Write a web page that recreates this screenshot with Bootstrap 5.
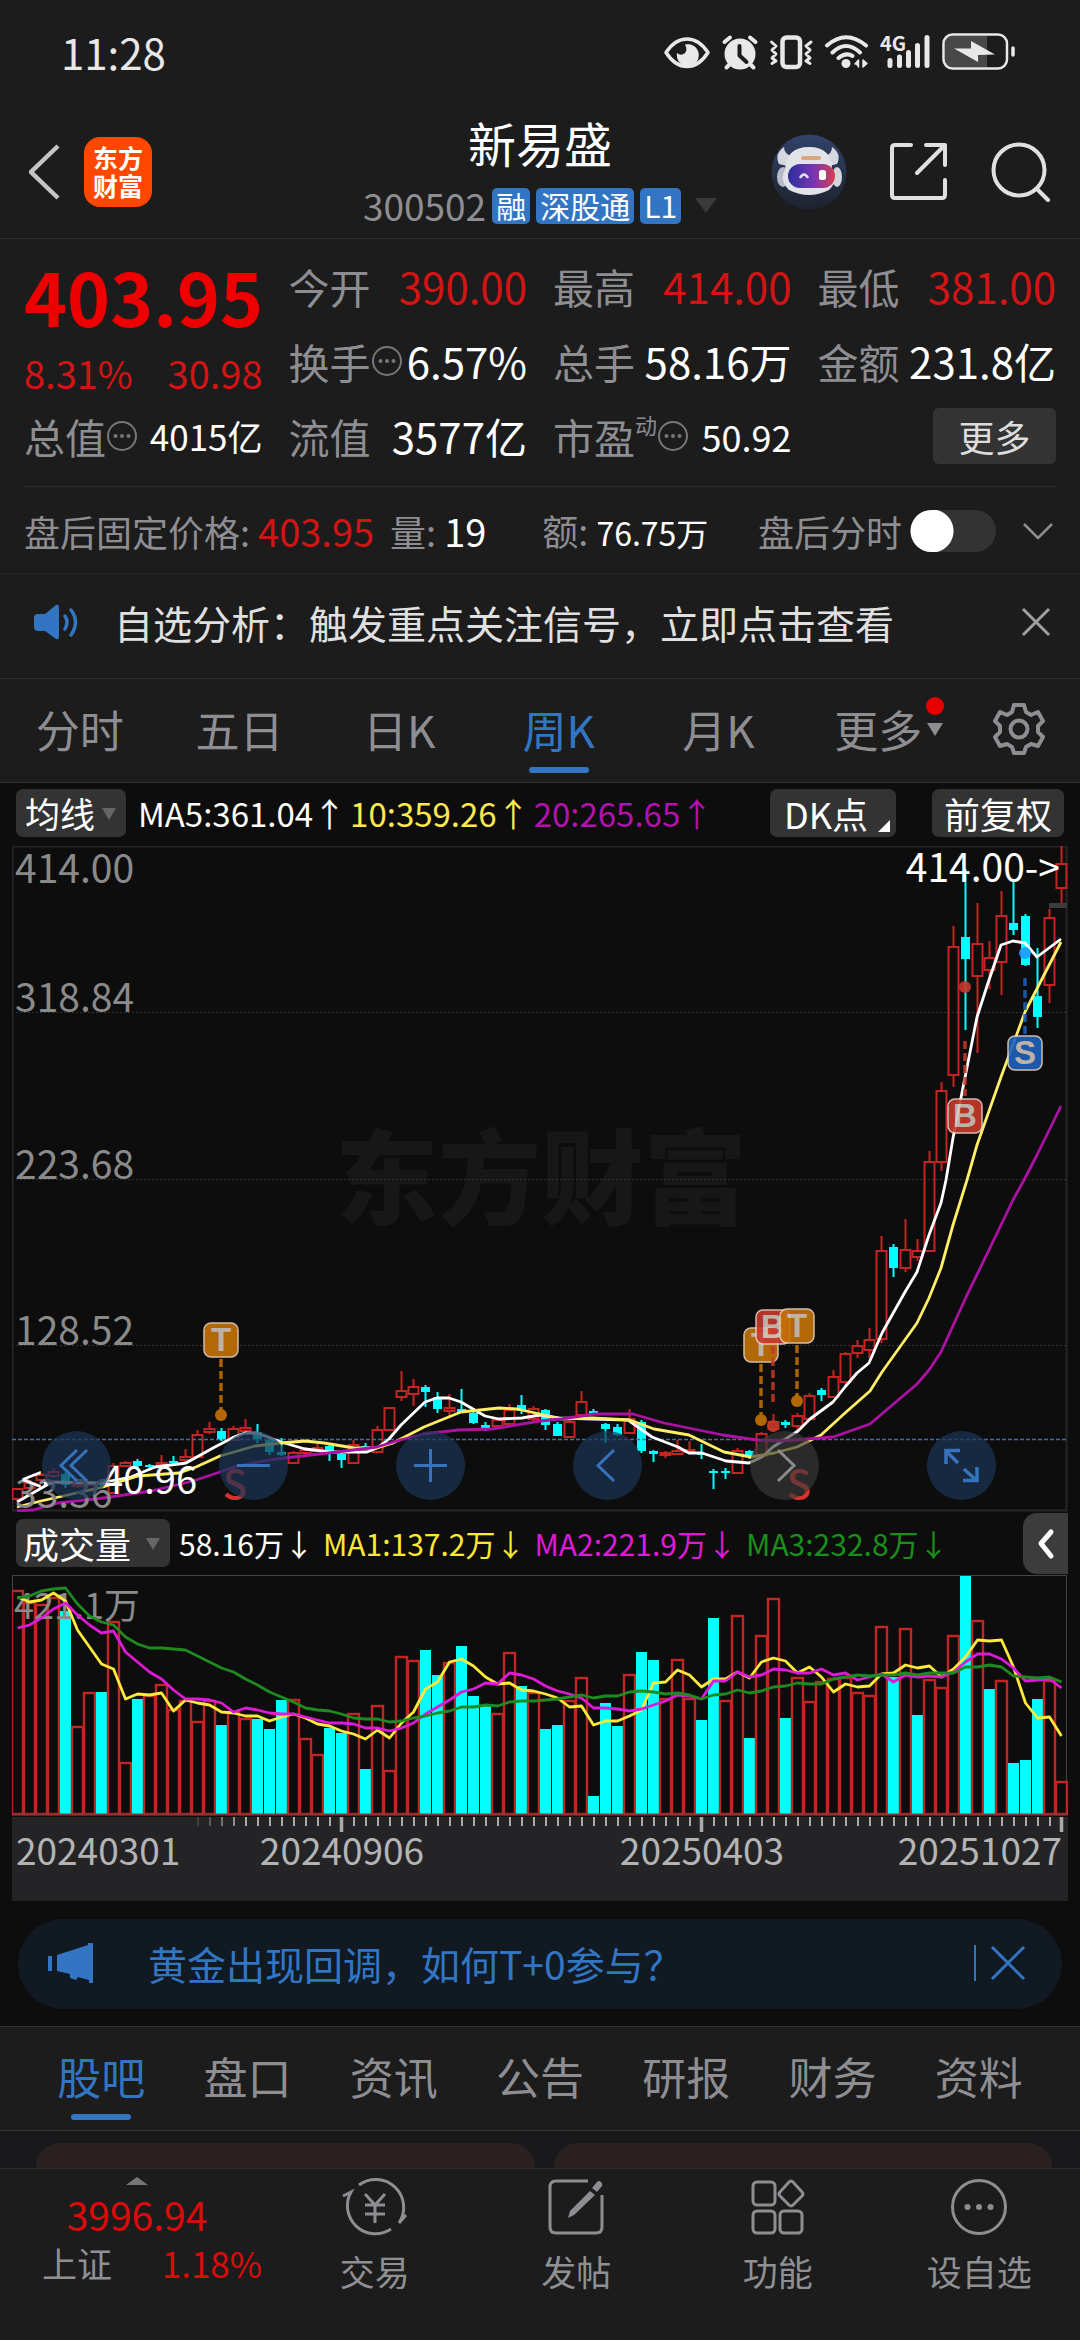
<!DOCTYPE html>
<html lang="zh-CN">
<head>
<meta charset="utf-8">
<meta name="viewport" content="width=device-width, initial-scale=1">
<title>新易盛 300502</title>
<link href="https://cdn.jsdelivr.net/npm/bootstrap@5.3.0/dist/css/bootstrap.min.css" rel="stylesheet">
<style>
:root{--panel:#1c1c1c;--ink:#0d0d0d;--line:#333;--dim:#8e8e92;--red:#d21414;--hot:#ee0000;--blue:#3276c3}
body{background:var(--ink);color:#fff;font-family:"Noto Sans CJK SC","Noto Sans",sans-serif;font-size:36px;line-height:48px;overflow-x:hidden}
a{color:inherit;text-decoration:none}
button{background:none;border:0;padding:0;color:inherit;line-height:inherit}
svg{display:block}
svg text{font-family:"Noto Sans CJK SC",sans-serif}
.panel{background:var(--panel)}
.rule-t{border-top:1px solid var(--line)}
.rule-b{border-bottom:1px solid var(--line)}
.rule-faint{border-bottom:1px solid #262626}
.dim{color:var(--dim)}.red{color:var(--red)}.hot{color:#dc0b0b}

.status{padding:0 65px 0 61px;height:104px;font-size:42px;color:#e8e8e8}
.head{padding:6px 29px 13px 29px}
.head-side{flex:1 1 0}
.head-tools{gap:42px}
.logo{width:68px;height:70px;border-radius:16px;background:#ff4700;font-size:25px;line-height:28px;font-weight:700;padding:6px 0;text-align:center}
.title{font-size:48px;line-height:64px;font-weight:400}
.sub{font-size:37px;line-height:39px;margin-top:12px;gap:6px}
.tag{background:var(--blue);border-radius:5px;font-size:30px;line-height:35px;height:36px;padding:0 4px}
.tri{width:0;height:0;border:11px solid transparent;border-top:15px solid #3a3a3a;border-bottom:0}

.quote{padding:9px 24px 13px;display:grid;grid-template-columns:repeat(4,minmax(0,1fr));column-gap:26px;grid-auto-rows:75px;align-items:center;font-size:42px}
.quote .dim{font-size:41px}
.price-cell{grid-row:span 2;padding-top:8px}
.price{font-size:73px;line-height:84px;font-weight:700;color:var(--hot)}
.pct{font-size:38px;line-height:56px;margin-top:8px}
.v35{font-size:35px}.v36{font-size:36px}
.quote .sup{font-size:22px;line-height:24px;align-self:flex-start}
.more{background:#333;border-radius:6px;font-size:36px;line-height:56px;width:123px;color:#ddd}
.thin-rule{height:1px;background:#2a2a2a;margin:0 24px}
.after{padding:18px 24px 16px;line-height:50px}
.after .v38{font-size:38px}.after .v32{font-size:32px}
.tog{appearance:none;width:86px;height:42px;border-radius:21px;margin:0 0 0 8px;background:radial-gradient(circle at 22px 50%,#fff 21px,transparent 22px) #333}

.notice{padding:20px 29px 28px 34px;line-height:56px;font-size:39px;color:#e0e0e0;gap:34px}
.ktabs{line-height:64px;font-size:44px;padding:18px 0 21px}
.tabx{flex:1 1 0;text-align:center;position:relative;color:var(--dim)}
.tabx.on{color:var(--blue)}
.tabx.on::after{content:"";position:absolute;left:50%;bottom:-12px;margin-left:-30px;width:60px;height:6px;border-radius:3px;background:var(--blue)}
.gear{width:122px}
.dot{position:absolute;right:14px;top:0;width:18px;height:18px;border-radius:50%;background:#e80000}
.caret{position:absolute;right:15px;top:26px;border:8px solid transparent;border-top:13px solid #8e8e92;border-bottom:0}
.btabs{padding:17px 28px 22px;line-height:64px;font-size:44px}

.ma{padding:6px 16px 9px;font-size:33px;line-height:48px;gap:4px}
.pick{position:relative;background:#333;border-radius:7px;margin-right:8px}
.pick select,.chip{appearance:none;display:block;background:none;border:0;color:#fff;font-size:35px;line-height:48px;height:48px;padding:0 30px 0 9px;outline:0}
.pick::after{content:"";position:absolute;right:10px;top:19px;border:7px solid transparent;border-top:12px solid #666;border-bottom:0;pointer-events:none}
.pick.vol{margin-right:0}
.pick.vol select{padding:0 38px 0 7px;font-size:36px}
.chip{background:#333;border-radius:7px;padding:0 12px;font-size:36px;position:relative;text-align:left}
.chip.dk{padding:0 28px 0 14px}
.chip.dk::after{content:"";position:absolute;right:6px;bottom:5px;border:6px solid transparent;border-right-color:#fff;border-bottom-color:#fff}
.yel{color:#ffe94f}.mag{color:#b412ad}
.volhead{padding:7px 0 8px 4px;font-size:30px;line-height:48px;position:relative;gap:9px}
.m1{color:#ffe832}.m2{color:#e018d8}.m3{color:#1b8f1b}
.drawer{position:absolute;right:0;top:1px;width:45px;height:61px;border-radius:14px 0 0 14px;background:#3c3c3c}
.chartwrap{margin:0 12px;position:relative}
.tools{position:absolute;left:30px;right:72px;bottom:12px}
.tools button{width:69px;height:69px;border-radius:50%;background:rgba(28,52,86,.72);stroke:#3573bd}
.tools button:disabled{background:rgba(58,58,58,.65);stroke:#8a8a8a}
.axis{background:#242427}

.promo{margin:18px 18px 17px;border-radius:45px;background:#111a23;color:var(--blue);font-size:39px;line-height:58px;padding:15px 36px 17px 30px}
.feed{background:#19191b;padding:12px 28px 0 36px;gap:19px}
.feed div{flex:1;height:100px;border-radius:24px 24px 0 0;background:#2a2020}
.dock{border-top:1px solid #2c2c2c;padding:8px 0 47px;font-size:35px;line-height:44px;color:#909094}
.dock .cellx{flex:1 1 0;text-align:center}
.dock .cellx span{display:block;margin-top:12px}
.dock .idx{flex:0 0 274px}
.idx-val{font-size:39px;line-height:50px;margin-top:4px}
.idx-row{line-height:48px;padding:0 12px 0 42px}
</style>
<script src="https://cdn.jsdelivr.net/npm/bootstrap@5.3.0/dist/js/bootstrap.bundle.min.js"></script>
</head>
<body>

<div class="status panel d-flex align-items-center justify-content-between">
  <span>11:28</span>
  <svg width="352" height="40" viewBox="13 12 352 40" fill="none" stroke="#e8e8e8" stroke-linecap="round" stroke-linejoin="round">
    <path d="M16 32.500Q25 19 37 19T58 32.500Q49 46.500 37 46.500T16 32.500Z" stroke-width="3.500"/>
    <path d="M35 24.500A11 11 0 1 1 27 33Q31 36 34.500 33.500Q38 30 35 24.500Z" fill="#e8e8e8" stroke="none"/>
    <circle cx="90" cy="34" r="15.500" fill="#e8e8e8" stroke="none"/>
    <path d="M74.500 22L80 17.500M105.500 22L100 17.500M79 45L76.500 47.500M101 45L103.500 47.500" stroke-width="4"/>
    <path d="M89.500 26V35.500L96.500 42" stroke="#1c1c1c" stroke-width="4"/>
    <rect x="132.500" y="17.500" width="17.500" height="29.500" rx="4" stroke-width="4.500"/>
    <path d="M121.500 22L126 26L122 30L126 34L122 38L126 41L122 43.500M161 22L156 26L160 30L156 34L160 38L156 41L160 43.500" stroke-width="3"/>
    <path d="M177 25.500Q196 9 216 25.500M182.500 32.500Q196 19.500 210 32.500M188.500 38Q196 32 202.500 36" stroke-width="4"/>
    <circle cx="196" cy="43.500" r="4.500" fill="#e8e8e8" stroke="none"/>
    <path d="M205 44L208.500 40V47M213 40V47L217 43.500Z" fill="#e8e8e8" stroke-width="1.500"/>
    <text x="230" y="31" font-size="20" font-weight="700" fill="#e8e8e8" stroke="none">4G</text>
    <path d="M240 40.500V45.500M249.500 37V45.500M258.500 32.500V45.500M267.500 25.500V45.500M277 17.500V45.500" stroke-width="5"/>
    <path d="M302 16H337V47H302Q295 47 295 40V23Q295 16 302 16Z" fill="#484848" stroke="none"/>
    <rect x="293.500" y="14.500" width="63.500" height="34" rx="9" stroke-width="2.500"/>
    <path d="M304 28.500L321 28.500V21L345 34.500L328 35V42Z" fill="#e8e8e8" stroke="none"/>
    <path d="M363 28V35" stroke-width="3.500"/>
  </svg>
</div>

<header class="head panel rule-b d-flex align-items-center justify-content-between">
  <div class="head-side d-flex align-items-center gap-4 mt-2">
    <a href="#" aria-label="返回"><svg width="31" height="56" viewBox="2 0 31 56" fill="none" stroke="#c4c4c4" stroke-width="4.500"><path d="M31 2L4 28L31 54"/></svg></a>
    <div class="logo">东方<br>财富</div>
  </div>
  <div class="text-center">
    <h1 class="title m-0">新易盛</h1>
    <div class="sub d-flex align-items-center">
      <span class="dim">300502</span><span class="tag">融</span><span class="tag">深股通</span><span class="tag">L1</span><span class="tri ms-2"></span>
    </div>
  </div>
  <div class="head-side head-tools d-flex align-items-center justify-content-end mt-2">
    <a href="#" aria-label="智能助手"><svg width="76" height="76" viewBox="0 0 76 76">
      <defs><linearGradient id="visor"><stop offset="0" stop-color="#2b2f9e"/><stop offset=".55" stop-color="#7a35b4"/><stop offset="1" stop-color="#d6404e"/></linearGradient>
      <linearGradient id="disc" x2="0" y2="1"><stop offset="0" stop-color="#31436a"/><stop offset="1" stop-color="#1d222e"/></linearGradient></defs>
      <circle cx="38" cy="38" r="37.500" fill="url(#disc)"/>
      <path d="M13 13Q3 20 8 30L16 32L21 22Q13 20 13 13ZM61 13Q71 20 66 30L58 32L54 22Q61 20 61 13Z" fill="#d5d6de"/>
      <ellipse cx="12" cy="43" rx="6" ry="10" fill="#b8bac8"/><ellipse cx="66" cy="43" rx="5" ry="10" fill="#d3d4dc"/>
      <path d="M14 36Q15 13 38 13T61 36Q68 46 58 56Q38 66 18 56Q8 46 14 36Z" fill="#e2e2e9"/>
      <rect x="17" y="30" width="47" height="24" rx="12" fill="url(#visor)"/>
      <rect x="30" y="22" width="20" height="4" rx="2" fill="#d9a67e"/>
      <path d="M29 44Q33 37 37 44" fill="none" stroke="#dfe0ff" stroke-width="2.500"/><rect x="48" y="36" width="7" height="10" rx="2.500" fill="#fff"/>
    </svg></a>
    <a href="#" aria-label="分享"><svg width="60" height="60" viewBox="0 0 60 60" fill="none" stroke="#e0e0e0" stroke-width="4" stroke-linecap="round" stroke-linejoin="round"><path d="M22 3H6Q3 3 3 6V53Q3 56 6 56H53Q56 56 56 53V38M37 3H56V23M55 4L28 31"/></svg></a>
    <a href="#" aria-label="搜索"><svg width="60" height="60" viewBox="0 0 60 60" fill="none" stroke="#e0e0e0" stroke-width="4" stroke-linecap="round"><circle cx="28" cy="28" r="25.500"/><path d="M46 47L57 58"/></svg></a>
  </div>
</header>

<section class="panel">
  <div class="quote text-nowrap">
    <div class="price-cell">
      <div class="price">403.95</div>
      <div class="pct red d-flex justify-content-between"><span>8.31%</span><span>30.98</span></div>
    </div>
    <div class="d-flex justify-content-between"><span class="dim">今开</span><span class="red">390.00</span></div>
    <div class="d-flex justify-content-between"><span class="dim">最高</span><span class="red">414.00</span></div>
    <div class="d-flex justify-content-between"><span class="dim">最低</span><span class="red">381.00</span></div>
    <div class="d-flex justify-content-between align-items-center"><span class="dim d-flex align-items-center">换手<svg width="32" height="32"><use href="#info"/></svg></span><span>6.57%</span></div>
    <div class="d-flex justify-content-between"><span class="dim">总手</span><span>58.16万</span></div>
    <div class="d-flex justify-content-between"><span class="dim">金额</span><span>231.8亿</span></div>
    <div class="d-flex justify-content-between align-items-center"><span class="dim d-flex align-items-center">总值<svg width="32" height="32"><use href="#info"/></svg></span><span class="v35">4015亿</span></div>
    <div class="d-flex justify-content-between"><span class="dim">流值</span><span>3577亿</span></div>
    <div class="d-flex justify-content-between align-items-center"><span class="dim d-flex align-items-center">市盈<span class="sup">动</span><svg width="32" height="32"><use href="#info"/></svg></span><span class="v36">50.92</span></div>
    <div class="text-end"><button class="more" type="button">更多</button></div>
  </div>
  <div class="thin-rule"></div>
  <div class="after rule-faint d-flex align-items-center text-nowrap">
    <span class="dim">盘后固定价格: <span class="red v38">403.95</span></span>
    <span class="dim ms-3">量: <span class="text-white v38">19</span></span>
    <span class="dim ms-5 ps-2">额: <span class="text-white v32">76.75万</span></span>
    <label class="dim ms-auto" for="aft">盘后分时</label><input class="tog" type="checkbox" role="switch" id="aft">
    <svg class="ms-4" width="36" height="20" viewBox="0 0 36 20" fill="none" stroke="#8e8e92" stroke-width="2.500"><path d="M4 3L18 17L32 3"/></svg>
  </div>
  <div class="notice rule-b d-flex align-items-center text-nowrap">
    <svg width="46" height="36" viewBox="0 0 46 36" fill="none" stroke="#3276c3" stroke-width="3.500" stroke-linecap="round"><path d="M4 10H11L22 1Q25 0 25 4V32Q25 36 22 35L11 27H4Q0 27 0 23V14Q0 10 4 10Z" fill="#3276c3" stroke="none"/><path d="M31 12Q35 18 31 25M37 6Q46 18 37 31"/></svg>
    <a href="#" class="flex-fill">自选分析：触发重点关注信号，立即点击查看</a>
    <button type="button" aria-label="关闭"><svg width="30" height="30" viewBox="0 0 30 30" stroke="#a0a0a0" stroke-width="3"><path d="M2 2L28 28M28 2L2 28"/></svg></button>
  </div>
</section>

<nav class="ktabs panel rule-b d-flex align-items-center text-nowrap">
  <a class="tabx" href="#">分时</a><a class="tabx" href="#">五日</a><a class="tabx" href="#">日K</a><a class="tabx on" href="#">周K</a><a class="tabx" href="#">月K</a>
  <a class="tabx" href="#">更多<span class="dot"></span><span class="caret"></span></a>
  <button class="gear d-flex justify-content-center" type="button" aria-label="设置"><svg width="52" height="52" viewBox="0 0 52 52" fill="none" stroke="#8e8e92" stroke-width="4" stroke-linejoin="round"><path d="M21 2H31L33 9L38 12L45 9L50 18L45 23V29L50 34L45 43L38 41L33 44L31 50H21L19 44L14 41L7 43L2 34L7 29V23L2 18L7 9L14 12L19 9Z"/><circle cx="26" cy="26" r="8.500"/></svg></button>
</nav>

<div class="ma d-flex align-items-center text-nowrap">
  <label class="pick"><select aria-label="指标"><option>均线</option></select></label>
  <span>MA5:361.04↑</span><span class="yel">10:359.26↑</span><span class="mag">20:265.65↑</span>
  <button class="chip dk ms-auto me-3" type="button">DK点</button>
  <button class="chip ms-3" type="button">前复权</button>
</div>

<div class="chartwrap">
  <svg id="kline" width="100%" viewBox="12 846 1056 666"></svg>
  <div class="tools d-flex justify-content-between">
    <button type="button" aria-label="最前"><svg width="69" height="69" viewBox="0 0 69 69" fill="none" stroke-width="3"><path d="M35 19L19 34.500L35 50M45 19L29 34.500L45 50"/></svg></button>
    <button type="button" aria-label="缩小"><svg width="69" height="69" viewBox="0 0 69 69" stroke-width="3"><path d="M18 34.500H51"/></svg></button>
    <button type="button" aria-label="放大"><svg width="69" height="69" viewBox="0 0 69 69" stroke-width="3"><path d="M18 34.500H51M34.500 18V51"/></svg></button>
    <button type="button" aria-label="左移"><svg width="69" height="69" viewBox="0 0 69 69" fill="none" stroke-width="3"><path d="M41 19L25 34.500L41 50"/></svg></button>
    <button type="button" aria-label="右移" disabled><svg width="69" height="69" viewBox="0 0 69 69" fill="none" stroke-width="3"><path d="M28 19L44 34.500L28 50"/></svg></button>
    <button type="button" aria-label="全屏"><svg width="69" height="69" viewBox="0 0 69 69" fill="none" stroke-width="3.500"><path d="M31 32L19 20M19 33V19.500H33M37 38L50 50M50 36V49.500H36"/></svg></button>
  </div>
</div>

<div class="chartwrap">
  <div class="volhead d-flex align-items-center text-nowrap">
    <label class="pick vol"><select aria-label="副图指标"><option>成交量</option></select></label>
    <span>58.16万↓</span><span class="m1">MA1:137.2万↓</span><span class="m2">MA2:221.9万↓</span><span class="m3">MA3:232.8万↓</span>
    <button class="drawer" type="button" aria-label="展开"><svg width="45" height="61" viewBox="0 0 45 61" fill="none" stroke="#fff" stroke-width="5" stroke-linecap="round" stroke-linejoin="round"><path d="M28 19L18 30.500L28 43"/></svg></button>
  </div>
  <svg id="volume" width="100%" viewBox="12 1575 1056 242"></svg>
  <svg id="dates" class="axis" width="100%" viewBox="12 1817 1056 84"></svg>
</div>

<div class="promo d-flex align-items-center text-nowrap">
  <svg width="48" height="40" viewBox="0 0 48 40" fill="#3276c3"><path d="M0 13H4V28H0ZM9 12L40 2V0H45V40H41V37L30 34L28 37L22 35V31L9 28Z"/></svg>
  <a href="#" class="flex-fill ms-5 ps-1">黄金出现回调，如何T+0参与？</a>
  <svg width="52" height="36" viewBox="0 0 52 36" fill="none" stroke="#3276c3"><path d="M1 0V36" stroke-width="2"/><path d="M18 2L50 34M50 2L18 34" stroke-width="3"/></svg>
</div>

<nav class="btabs panel rule-t rule-b d-flex text-nowrap">
  <a class="tabx on" href="#">股吧</a><a class="tabx" href="#">盘口</a><a class="tabx" href="#">资讯</a><a class="tabx" href="#">公告</a><a class="tabx" href="#">研报</a><a class="tabx" href="#">财务</a><a class="tabx" href="#">资料</a>
</nav>
<div class="feed d-flex"><div></div><div></div></div>

<nav class="dock panel fixed-bottom d-flex text-nowrap">
  <a href="#" class="idx d-block text-center">
    <svg class="mx-auto" width="22" height="8" viewBox="0 0 22 8" fill="#777"><path d="M11 0L22 8H0Z"/></svg>
    <div class="idx-val hot">3996.94</div>
    <div class="idx-row d-flex justify-content-between"><span>上证</span><span class="hot">1.18%</span></div>
  </a>
  <a href="#" class="cellx"><svg class="mx-auto" width="68" height="60" viewBox="0 0 68 60" fill="none" stroke="#8e8e92" stroke-width="3"><path d="M18 8A28 28 0 0 1 58 46L65 38M50 52A28 28 0 0 1 10 15L2 19M24 17L34 28L44 17M34 28V46M24 28H44M24 37H44"/></svg><span>交易</span></a>
  <a href="#" class="cellx"><svg class="mx-auto" width="60" height="60" viewBox="0 0 60 60" fill="none" stroke="#8e8e92" stroke-width="3"><path d="M42 4H10Q4 4 4 10V50Q4 56 10 56H50Q56 56 56 50V18"/><path d="M46 11L51 5Q53 3 55 5T56 9L51 15ZM44 14L49 18L28 38L22 41L24 34Z" fill="#8e8e92" stroke="none"/></svg><span>发帖</span></a>
  <a href="#" class="cellx"><svg class="mx-auto" width="60" height="60" viewBox="0 0 60 60" fill="none" stroke="#8e8e92" stroke-width="3"><rect x="5" y="5" width="22" height="23" rx="4"/><rect x="5" y="34" width="22" height="22" rx="4"/><rect x="32" y="34" width="22" height="22" rx="4"/><path d="M41 5Q43 3 45 5L54 15Q56 17 54 19L45 28Q43 30 41 28L32 19Q30 17 32 15Z"/></svg><span>功能</span></a>
  <a href="#" class="cellx"><svg class="mx-auto" width="60" height="60" viewBox="0 0 60 60" fill="#8e8e92"><circle cx="30" cy="30" r="26.500" fill="none" stroke="#8e8e92" stroke-width="3"/><circle cx="18.500" cy="30" r="3"/><circle cx="30" cy="30" r="3"/><circle cx="41.500" cy="30" r="3"/></svg><span>设自选</span></a>
</nav>

<svg width="0" height="0" class="position-absolute"><symbol id="info" viewBox="0 0 32 32"><circle cx="16" cy="16" r="14" fill="none" stroke="#77777a" stroke-width="2"/><circle cx="9.500" cy="16" r="2" fill="#77777a"/><circle cx="16" cy="16" r="2" fill="#77777a"/><circle cx="22.500" cy="16" r="2" fill="#77777a"/></symbol></svg>

<script>
// weekly candles: direction, high, body top, body bottom, low
const K = `u 1489 1489 1499 1499|u 1481 1483 1488 1490|u 1473 1475 1480 1484|u 1468 1472 1476 1478|d 1472 1474 1485 1488|u 1482 1484 1486 1488|u 1481 1483 1485 1486|d 1479 1482 1485 1488|u 1463 1466 1493 1493|u 1461 1463 1466 1467|d 1459 1461 1466 1468|d 1464 1465 1467 1470|u 1455 1463 1465 1467|d 1456 1461 1463 1465|u 1449 1457 1460 1462|u 1430 1435 1457 1457|u 1422 1429 1432 1434|d 1428 1431 1440 1441|u 1426 1429 1440 1441|u 1419 1428 1431 1432|d 1424 1432 1439 1443|d 1436 1440 1452 1455|d 1438 1452 1455 1456|u 1451 1453 1463 1464|u 1447 1450 1453 1454|u 1444 1448 1451 1452|d 1445 1446 1451 1461|d 1452 1454 1460 1468|u 1440 1445 1463 1463|d 1443 1446 1449 1450|u 1426 1430 1452 1452|u 1408 1408 1430 1430|u 1371 1391 1397 1401|u 1379 1387 1394 1406|d 1385 1387 1392 1407|d 1392 1397 1409 1413|u 1394 1408 1411 1417|d 1389 1409 1412 1412|d 1409 1413 1423 1424|d 1422 1425 1428 1431|u 1418 1420 1426 1427|u 1404 1410 1424 1425|d 1395 1405 1411 1414|u 1406 1409 1419 1421|d 1409 1410 1425 1430|d 1422 1424 1436 1436|u 1420 1422 1437 1438|u 1391 1402 1415 1415|d 1409 1411 1414 1415|d 1423 1424 1429 1443|d 1424 1427 1435 1436|u 1409 1419 1433 1434|d 1420 1422 1451 1453|d 1450 1451 1454 1462|u 1451 1453 1455 1458|u 1440 1451 1454 1454|u 1441 1450 1452 1452|d 1444 1453 1455 1459|d 1469 1471 1473 1489|d 1468 1471 1473 1479|u 1448 1451 1473 1473|d 1450 1451 1457 1459|u 1432 1434 1456 1456|u 1414 1422 1429 1432|d 1420 1422 1425 1428|u 1413 1416 1426 1432|u 1393 1396 1419 1419|d 1388 1390 1395 1401|u 1370 1377 1397 1397|u 1352 1354 1382 1385|u 1340 1346 1353 1358|u 1328 1340 1350 1358|u 1236 1251 1339 1343|d 1244 1247 1268 1277|u 1219 1250 1268 1272|u 1239 1251 1257 1261|u 1151 1162 1251 1251|u 1082 1091 1162 1171|u 926 947 1075 1087|d 869 937 959 1030|u 903 944 976 1053|u 941 958 970 989|u 891 916 962 995|d 880 923 930 935|d 914 916 965 966|d 948 996 1017 1028|u 909 918 985 1003|u 846 864 888 904`.split('|').map(r => r.split(' '));
// weekly volume bar tops, and the indexes of the falling weeks
const V = [1591,1603,1605,1598,1611,1727,1693,1692,1622,1763,1699,1696,1685,1710,1701,1722,1701,1725,1712,1719,1719,1729,1700,1700,1739,1755,1728,1733,1714,1769,1706,1771,1657,1661,1650,1675,1663,1646,1696,1706,1714,1653,1686,1693,1729,1725,1701,1678,1796,1703,1726,1675,1652,1660,1699,1660,1699,1720,1618,1701,1616,1738,1636,1599,1718,1678,1702,1682,1679,1678,1693,1696,1627,1677,1629,1715,1680,1688,1636,1576,1621,1689,1681,1763,1760,1699,1681,1782];
const VD = [4,7,10,17,20,21,22,26,27,29,34,35,37,38,39,42,44,45,48,49,50,52,53,57,58,61,64,73,75,79,81,83,84,85];
const A1 = [1597,1602,1600,1593,1601,1630,1647,1664,1669,1699,1694,1695,1693,1711,1700,1703,1705,1712,1713,1716,1716,1721,1717,1714,1718,1724,1726,1731,1734,1739,1730,1738,1723,1712,1689,1682,1662,1659,1666,1677,1684,1683,1690,1691,1694,1698,1707,1706,1725,1721,1721,1716,1710,1683,1682,1670,1675,1687,1679,1679,1672,1678,1662,1658,1661,1673,1667,1677,1692,1684,1687,1686,1674,1673,1665,1668,1666,1677,1669,1657,1640,1641,1640,1667,1703,1718,1717,1736];
const A2 = [1628,1625,1618,1609,1603,1615,1625,1633,1631,1652,1662,1672,1679,1690,1699,1699,1700,1703,1712,1708,1710,1713,1714,1714,1717,1720,1723,1723,1724,1728,1728,1731,1728,1723,1714,1707,1700,1692,1689,1683,1684,1673,1675,1679,1686,1691,1694,1698,1708,1708,1709,1711,1709,1705,1701,1695,1696,1699,1681,1681,1672,1677,1675,1669,1670,1673,1673,1669,1675,1673,1680,1677,1674,1682,1675,1677,1676,1677,1672,1662,1654,1654,1659,1668,1681,1680,1679,1688];
const A3 = [1598,1596,1591,1589,1588,1604,1616,1622,1625,1637,1644,1648,1648,1649,1650,1656,1662,1668,1672,1679,1685,1692,1697,1702,1708,1710,1711,1714,1718,1719,1719,1722,1721,1718,1716,1713,1711,1707,1707,1705,1706,1702,1701,1701,1700,1699,1697,1695,1698,1696,1696,1692,1691,1692,1694,1693,1695,1699,1695,1694,1690,1693,1691,1687,1686,1683,1684,1684,1679,1677,1675,1676,1675,1675,1673,1675,1673,1673,1673,1667,1667,1665,1667,1676,1677,1678,1677,1682];
const M5 = "17,1502 52,1482 100,1483 131,1477 155,1467 186,1463 213,1448 234,1437 245,1433 257,1433 281,1442 305,1449 331,1452 367,1452 377,1448 389,1439 401,1425 425,1402 437,1398 449,1398 461,1402 485,1416 499,1419 522,1418 540,1415 559,1418 628,1420 652,1437 678,1447 689,1453 702,1453 726,1461 749,1463 762,1457 773,1447 798,1431 810,1419 833,1402 845,1387 857,1373 869,1363 882,1333 905,1292 917,1272 929,1235 941,1203 946,1180 953,1138 977,1017 988,983 1001,945 1013,941 1025,943 1037,957 1049,948 1061,939";
const M10 = "17,1507 41,1501 103,1487 138,1476 179,1473 196,1467 220,1456 255,1446 281,1443 305,1441 324,1443 354,1448 377,1448 393,1443 424,1427 461,1412 499,1408 517,1409 540,1414 561,1419 592,1418 630,1420 654,1429 689,1435 724,1452 751,1457 774,1453 797,1447 821,1435 845,1413 870,1391 882,1372 917,1323 929,1298 941,1268 953,1225 967,1180 977,1145 1001,1077 1025,1012 1061,942";
const M20 = "17,1511 33,1510 58,1503 103,1498 151,1491 193,1481 238,1466 269,1460 293,1457 337,1452 377,1447 400,1440 424,1434 458,1430 492,1429 540,1421 561,1419 595,1414 633,1414 664,1423 723,1435 757,1440 781,1441 833,1437 870,1424 917,1384 929,1370 941,1352 967,1295 988,1252 1013,1200 1024,1180 1037,1155 1061,1106";
const X = i => 17.5 + 12 * i, UP = '#c32424', DN = '#00ffff';
const poly = (p, c, w) => `<polyline points="${p}" fill="none" stroke="${c}" stroke-width="${w}" stroke-linejoin="round"/>`;
const txt = (x, y, s, c, z, a) => `<text x="${x}" y="${y}" fill="${c}" font-size="${z}" ${a || ''}>${s}</text>`;

let g = txt(541, 1217, '东方财富', '#171717', 103, 'font-weight="900" text-anchor="middle"');
g += '<rect x="12.500" y="846.500" width="1054" height="664" fill="none" stroke="#262626" stroke-width="2"/>';
[1012, 1179, 1345].forEach(y => g += `<path d="M12 ${y}.500H1067" stroke="#333" stroke-dasharray="2 2"/>`);
K.forEach(([d, h, t, b, l], i) => {
  const x = X(i), bh = Math.max(b - t, 1);
  g += d === 'u'
    ? `<path d="M${x} ${h}V${t}M${x} ${b}V${l}" stroke="${UP}" stroke-width="2"/><rect x="${x - 5}" y="${t}" width="10" height="${bh}" fill="none" stroke="${UP}" stroke-width="2"/>`
    : `<path d="M${x} ${h}V${l}" stroke="${DN}" stroke-width="2"/><rect x="${x - 4.5}" y="${t}" width="9" height="${bh}" fill="${DN}"/>`;
});
g += '<path d="M12 1439.500H1067" stroke="#4070a8" stroke-width="1.500" stroke-dasharray="4 2"/><rect x="1049" y="903" width="18" height="5" fill="#3c3c3c"/>';
g += poly(M5, '#fff', 2.8) + poly(M10, '#ffee66', 2.8) + poly(M20, '#ab12a4', 2.8);
[[883, '414.00'], [1012, '318.84'], [1179, '223.68'], [1345, '128.52'], [1508, '33.36']].forEach(([y, s]) => g += txt(15, y, s, '#8a8a8a', 39));
g += txt(1060, 882, '414.00-&gt;', '#fff', 39, 'text-anchor="end"') + txt(21, 1494, '&lt;-', '#fff', 38) + txt(197, 1494, '40.96', '#fff', 38, 'text-anchor="end"');
g += txt(235, 1499, 'S', '#d93030', 40, 'text-anchor="middle" font-weight="500"') + txt(799, 1499, 'S', '#d93030', 40, 'text-anchor="middle" font-weight="500"');
// trade markers: x, badge top, letter, fill, stem from, stem to, dot y
[[221,1322,'T','#c57206',1359,1410,1415],[761,1327,'T','#c57206',1364,1414,1420],[773,1309,'B','#c9382a',1346,1402,1426],[797,1308,'T','#c57206',1345,1396,1401],[965,1098,'B','#c9382a',1041,1096,987],[1025,1035,'S','#1e62bd',978,1034,953]].forEach(([x, y, s, c, a, b, dy]) => {
  g += `<path d="M${x} ${a}V${b}" stroke="${c}" stroke-width="3.500" stroke-dasharray="8 4" opacity=".85"/><circle cx="${x}" cy="${dy}" r="6" fill="${s === 'S' ? '#1e9bff' : c}" opacity=".9"/>`;
  g += `<g opacity=".9"><rect x="${x - 17}" y="${y + 1}" width="34" height="34" rx="7" fill="${c}" stroke="#e6cfc0" stroke-width="1.500"/><text x="${x}" y="${y + 29}" text-anchor="middle" style="font-family:'Liberation Sans',sans-serif" font-weight="700" font-size="33" fill="#cfc4bc">${s}</text></g>`;
});
document.getElementById('kline').innerHTML = g;

g = '<path d="M12.500 1815V1575.500H1066.500V1815" fill="none" stroke="#444"/>';
V.forEach((t, i) => {
  g += VD.includes(i) ? `<rect x="${X(i) - 5.5}" y="${t}" width="11" height="${1814 - t}" fill="${DN}"/>`
    : `<rect x="${X(i) - 5.5}" y="${t}" width="11" height="${1814 - t}" fill="none" stroke="${UP}" stroke-width="2.400"/>`;
});
g += '<path d="M12 1814.500H1067" stroke="#8f3434" stroke-width="2"/>' + txt(14, 1619, '421.1万', '#8a8a8a', 36);
[[A1, '#ffe93a'], [A2, '#dd1ad6'], [A3, '#1f8a1f']].forEach(([p, c]) => g += poly(p.map((y, i) => X(i) + ',' + y).join(' '), c, 2.8));
document.getElementById('volume').innerHTML = g;

g = '';
for (let i = 15; i < 88; i++) {
  const big = i === 27 || i === 57 || i === 87;
  g += `<path d="M${X(i) + (big ? 0 : .5)} 1817V${big ? 1832 : 1826}" stroke="#aaa" stroke-width="${big ? 3.5 : 2}" opacity="${Math.min(1, (i - 14) / 5)}"/>`;
}
[[16, '20240301', 'start'], [342, '20240906', 'middle'], [702, '20250403', 'middle'], [1062, '20251027', 'end']].forEach(([x, s, a]) => g += txt(x, 1865, s, '#b4b4b4', 37, `text-anchor="${a}"`));
document.getElementById('dates').innerHTML = g;
</script>
</body>
</html>
